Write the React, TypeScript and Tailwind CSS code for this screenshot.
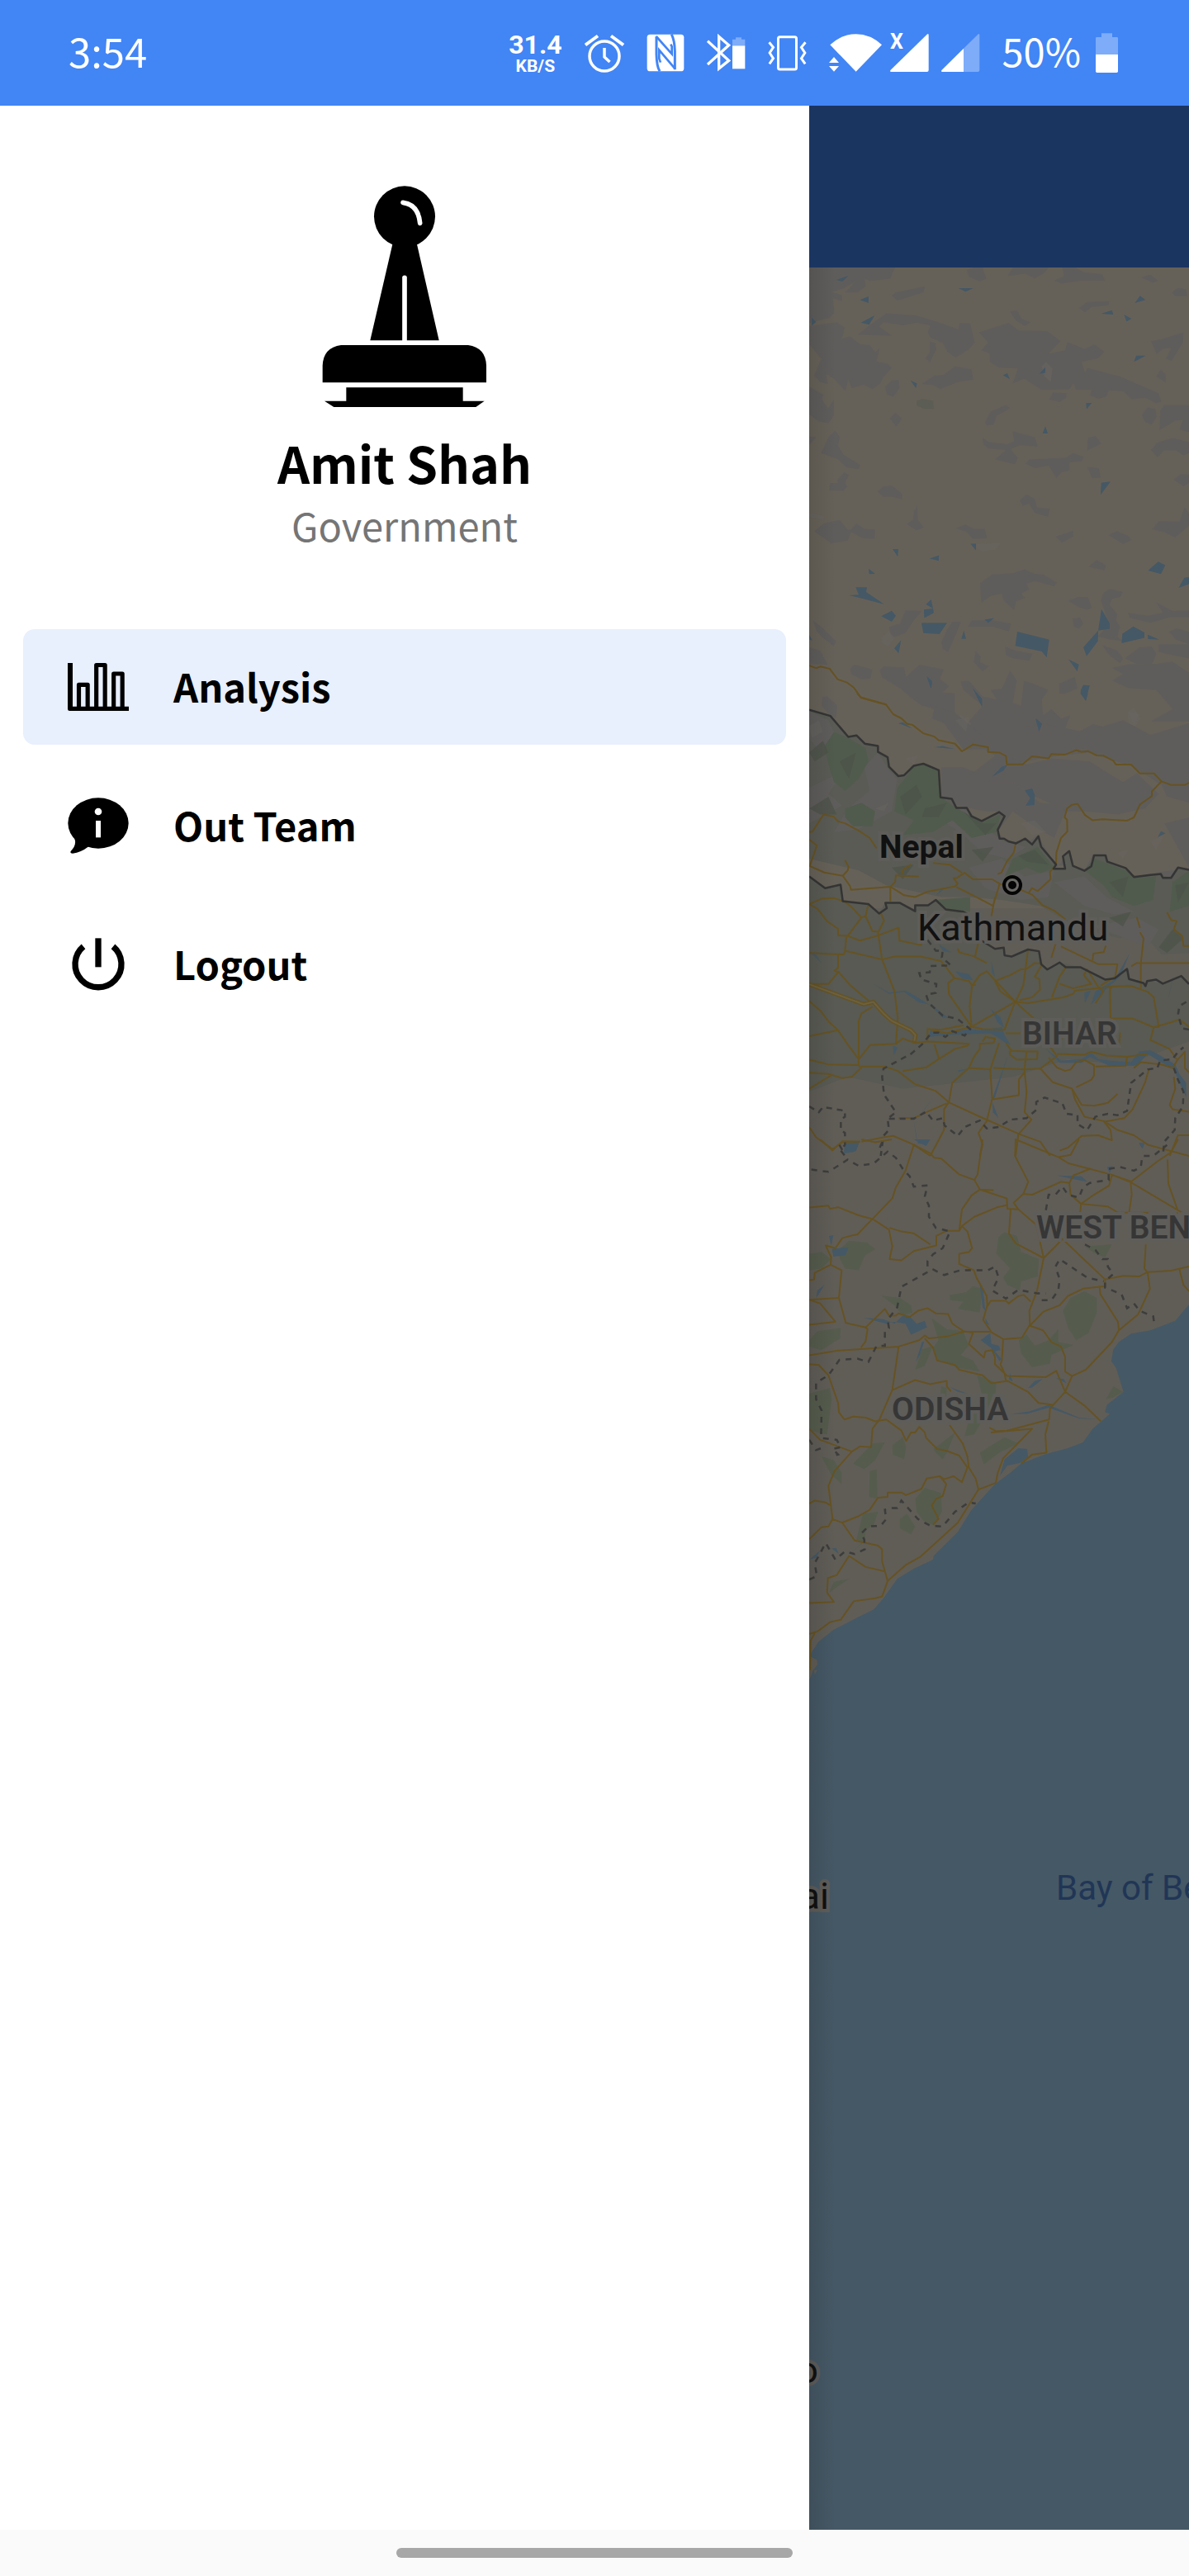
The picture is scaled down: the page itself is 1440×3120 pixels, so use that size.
import type { ReactNode } from 'react';

const TEXT_FONT = "font-['Noto_Sans_CJK_JP','Noto_Sans',sans-serif]";
const ROBOTO = "font-['Roboto',sans-serif]";

/* ---------- Status bar ---------- */

function AlarmIcon() {
  return (
    <svg viewBox="708 40 48 48" className="h-12 w-12" fill="none" stroke="white" strokeWidth="3.5">
      <circle cx="732" cy="68" r="18" />
      <path d="M732 58V69L738.5 75" />
      <path d="M709 54.500L724 43.500M740 43.500L755 54.500" strokeWidth="4" />
    </svg>
  );
}

function NfcIcon() {
  return (
    <svg viewBox="546 119 138 144" className="h-12 w-[46px]" fill="none" stroke="#4285f5" strokeWidth="9">
      <rect x="548" y="124" width="134" height="134" rx="11" fill="white" stroke="none" />
      <path d="M582 132V196Q583 240 594 258" />
      <path d="M649 252V184Q648 146 637 124" />
      <path d="M581 131L638 195V168L634 160" strokeWidth="8" />
      <path d="M597 226L592 212V181L650 249" strokeWidth="8" />
    </svg>
  );
}

function BluetoothIcon() {
  return (
    <svg viewBox="765 119 141 144" className="h-12 w-[47px]" fill="white">
      <path d="M768 148L845 219L809 248V132L845 163L768 233" fill="none" stroke="white" strokeWidth="10" />
      <path d="M858 165V142H870V135H891V142H904V165Z" opacity="0.32" />
      <path d="M858 165H904V249H858Z" />
    </svg>
  );
}

function VibrateIcon() {
  return (
    <svg viewBox="989 119 140 144" className="h-12 w-[47px]" fill="none" stroke="white" strokeWidth="9">
      <rect x="1026" y="133" width="66" height="118" rx="6" />
      <path d="M993 153L1008 171L995 191L1008 211L994 231M1125 153L1110 171L1123 191L1110 211L1124 231" />
    </svg>
  );
}

function WifiIcon() {
  return (
    <svg viewBox="69 120 195 144" className="h-12 w-[65px]" fill="white">
      <path d="M73 163Q115 124 167 124T261 163L167 260Z" />
      <path d="M87 203L62 232H112Z" fill="#4285f5" />
      <path d="M87 207L69 228H105ZM69 240H105L87 260Z" />
    </svg>
  );
}

function SignalNoDataIcon() {
  return (
    <svg viewBox="288 120 147 144" className="h-12 w-[49px]" fill="white">
      <path d="M293 261Q289 258 293 254L425 125Q431 120 431 128V255Q431 261 425 261Z" />
      <text x="291" y="178" className={ROBOTO} fontSize="75" fontWeight="700">
        X
      </text>
    </svg>
  );
}

function SignalHalfIcon() {
  return (
    <svg viewBox="477 120 141 144" className="h-12 w-[47px]" fill="white">
      <path d="M558 176L610 125Q616 120 616 128V255Q616 261 610 261H558Z" opacity="0.32" />
      <path d="M479 261Q475 258 479 254L558 176V261Z" />
    </svg>
  );
}

function BatteryIcon() {
  return (
    <svg viewBox="1041 120 81 144" className="h-12 w-[27px]" fill="white">
      <path d="M1041 198V139Q1041 135 1045 135H1062V121H1101V135H1118Q1122 135 1122 139V198Z" opacity="0.32" />
      <path d="M1041 198H1122V259Q1122 264 1117 264H1046Q1041 264 1041 259Z" />
    </svg>
  );
}

function StatusBar() {
  return (
    <header className="flex h-32 shrink-0 items-center justify-between bg-[#4285f5] pr-[86px] pl-[83px] text-white">
      <span className={`${TEXT_FONT} pb-2 text-[49px] leading-none font-normal`}>3:54</span>
      <div className="flex items-center gap-[27px]">
        <div className={`${ROBOTO} flex flex-col items-center font-bold`}>
          <span className="text-[32px] leading-8">31.4</span>
          <span className="text-[21px] leading-[21px]">KB/S</span>
        </div>
        <AlarmIcon />
        <NfcIcon />
        <BluetoothIcon />
        <VibrateIcon />
        <div className="flex items-center">
          <WifiIcon />
          <div className="ml-2 flex items-center gap-3.5">
            <SignalNoDataIcon />
            <SignalHalfIcon />
          </div>
        </div>
        <div className="flex items-center gap-[18px]">
          <span className={`${TEXT_FONT} pb-2 text-[47px] leading-none font-normal`}>50%</span>
          <BatteryIcon />
        </div>
      </div>
    </header>
  );
}

/* ---------- Drawer ---------- */

function StampLogo() {
  return (
    <svg viewBox="269 73 600 816" className="h-[272px] w-[200px]">
      <circle cx="569" cy="188" r="111" />
      <path d="M527 280H612L694 638H444Z" />
      <path d="M271 791V730Q273 664 338 655H800Q864 664 866 730V791Z" />
      <path d="M357 809H781V862H357Z" />
      <path d="M278 858H859L828 880H312Z" />
      <path d="M563 137C601 142 621 168 625 212" fill="none" stroke="white" strokeWidth="17" strokeLinecap="round" />
      <path d="M569 410V642" fill="none" stroke="white" strokeWidth="17" strokeLinecap="round" />
    </svg>
  );
}

function ChartIcon() {
  return (
    <svg viewBox="246 165 222 222" className="size-[74px]">
      <path d="M246 189H264V347H468V363H253Q246 363 246 356Z" />
      <path d="M286.500 350V268H318.500V350M350 350V196.500H381.500V350M413 350V228H444.500V350" fill="none" stroke="black" strokeWidth="15.500" strokeLinejoin="round" />
    </svg>
  );
}

function InfoBubbleIcon() {
  return (
    <svg viewBox="246 669 222 222" className="size-[74px]">
      <ellipse cx="357" cy="771" rx="110" ry="92" />
      <path d="M268 822C280 842 270 860 257 873Q253 881 264 881Q294 878 322 856Z" />
      <circle cx="357" cy="729" r="13" fill="white" />
      <path d="M348 762H366V823H348Z" fill="white" />
    </svg>
  );
}

function PowerIcon() {
  return (
    <svg viewBox="246 1173 222 222" className="size-[74px]" fill="none" stroke="black" strokeWidth="22">
      <path d="M303 1219A84 84 0 1 0 411 1219" />
      <path d="M357 1189V1294" />
    </svg>
  );
}

function NavItem({ icon, label, active }: { icon: ReactNode; label: string; active?: boolean }) {
  return (
    <button
      type="button"
      className={
        active
          ? 'flex h-[140px] w-full items-center gap-[54px] rounded-[14px] bg-[#e8effd] px-[54px] text-left'
          : 'flex h-[140px] w-full items-center gap-[54px] rounded-[14px] px-[54px] text-left'
      }
    >
      {icon}
      <span className="pb-1 text-[47px] leading-none font-bold">{label}</span>
    </button>
  );
}

function Drawer() {
  return (
    <aside className={`${TEXT_FONT} flex flex-col bg-white px-7 pt-24 text-black`}>
      <div className="flex flex-col items-center">
        <StampLogo />
        <h1 className="mt-6 text-[61px] leading-[80px] font-bold">Amit Shah</h1>
        <p className="text-[47px] leading-[72px] font-normal text-[#757575]">Government</p>
      </div>
      <nav className="mt-[90px] flex flex-col gap-7">
        <NavItem icon={<ChartIcon />} label="Analysis" active />
        <NavItem icon={<InfoBubbleIcon />} label="Out Team" />
        <NavItem icon={<PowerIcon />} label="Logout" />
      </nav>
    </aside>
  );
}

/* ---------- Map ---------- */

const ROCK = '#5f5d5b';
const WATER = '#455865';

function Plateau() {
  return (
    <g transform="translate(960 300) scale(.33333 .38265)">
      <g fill={ROCK}>
        <path d="M60 63H372L355 98L280 106L262 98L266 122L236 142H190L225 110L182 130L143 140L180 150V170L146 160L152 205L135 222L60 238Z" />
        <path d="M60 248L160 236L190 252L180 285L148 315L138 300L208 280L245 305L280 308L300 330L316 318L305 360L344 366L360 380L330 410L318 430L290 448L258 434L215 445L202 418L192 455L150 415L122 400L128 432L100 425L78 405L104 352L60 305Z" />
        <path d="M60 440L112 465L106 480L128 508L150 480V530L130 556L95 550L60 528ZM60 598L85 600L60 625Z" />
        <path d="M235 276L275 248L340 208L450 214L530 236L602 258L606 238L645 240L662 300L640 322L592 348L562 330L545 302L500 285L490 268L500 246L450 238L400 246L330 236L315 250L362 279Z" />
        <path d="M360 152L372 142L482 122L475 142L380 168ZM632 70L660 63H690L704 98L680 108L640 92ZM800 63H930L915 80L880 98L845 82L780 90ZM950 104L985 90L980 63H1025L1060 78L1125 84L1135 105L1060 104L975 114Z" />
        <path d="M676 268L785 238L822 262L925 264L974 296L930 335L990 325L998 298L1060 320L1098 306L1132 330L1110 350L1050 362L1062 395L1070 380L1190 408L1330 460L1340 488L1320 492L1280 475L1232 480L1200 455L1148 452L1140 472L1110 478L1080 468L1085 450L1030 450L1020 430L1005 448L905 450L840 415L800 430L818 382L750 380L716 362L715 335L685 325L710 300Z" />
        <path d="M482 350L498 332V296L520 302L522 322L508 345L500 364ZM467 432L515 405L550 402L590 375L650 385L657 418L600 425L535 448L510 435ZM336 440L360 420L386 418L388 445L366 472L342 465ZM352 540L374 522L398 542L376 567ZM789 202L816 198L832 225L865 236L845 248L812 232ZM1040 190L1070 172L1150 170L1148 182L1085 188L1062 206Z" />
        <path d="M1265 94L1300 85L1328 104L1310 112ZM1378 142L1400 126L1430 132L1434 154L1390 154ZM1302 296L1345 288L1420 268L1418 300L1376 360L1356 350L1375 318L1345 320L1322 338ZM1320 408L1338 385L1355 402L1357 428ZM1268 530L1290 505L1318 510L1323 535L1305 560L1280 552ZM1336 515L1350 498H1440V585L1405 575L1418 545L1390 548L1332 578ZM1302 640L1322 618L1380 602L1440 615V650L1420 658L1392 642H1350L1325 664Z" />
        <path d="M932 480L945 458L995 460L994 475L970 489ZM699 552L720 518L775 498L790 508L742 532L730 560L705 563ZM690 602L712 615L780 622L805 612L798 580L880 600L890 630L828 625L792 637L818 665L808 686L735 670L775 640L710 636L692 622ZM845 684L860 670L990 665L1020 650L1058 662L1050 676L1005 680L1006 706L978 710L958 729L930 690L880 698ZM1070 642L1072 602L1100 596L1122 620ZM1070 693L1112 698L1120 728L1088 730Z" />
        <path d="M103 650L130 600L155 578L172 600L165 625L185 655L247 688L238 702L195 695L165 670ZM132 768L136 745H165L162 735L188 710L204 720L190 745L200 755L185 770ZM308 772L330 755L360 753L398 778V797L360 788H328ZM414 875L438 860L440 835L453 817L455 862L477 885L450 895ZM79 898L115 872L170 862L200 892L212 892L232 872L260 890L300 892L298 922L255 920L212 900L200 928L140 936ZM592 888L628 876L660 890L698 890L707 920L655 922L632 900ZM825 800L850 780L880 795L888 822L935 826L928 852L880 840L858 810L835 818Z" />
        <path d="M955 914L1020 896V914L978 934ZM1148 910L1178 897L1220 912L1232 926L1200 938ZM1306 892L1330 866L1405 867L1424 822L1440 840V880L1390 918L1350 900ZM1384 734L1410 716L1440 718V745L1420 756ZM1074 1010L1104 988L1140 1006L1132 1021ZM681 1062L725 1034L800 1030L842 1018L880 1032L910 1034L960 1060L950 1072L880 1055L850 1064L860 1082L830 1095L845 1108L812 1120L805 1148L765 1115L760 1095L720 1102L685 1125Z" />
        <path d="M1000 1118L1040 1105L1072 1106L1088 1140L1070 1146L1040 1138ZM1120 1118Q1125 1085 1155 1080L1200 1090L1190 1106L1160 1112L1152 1130L1180 1160L1175 1180L1190 1200L1180 1230L1200 1245L1150 1240L1110 1230L1150 1190ZM1218 1155L1290 1165L1345 1155L1320 1122L1380 1150L1440 1148V1170L1370 1170L1300 1188L1225 1172ZM1016 1174L1045 1170L1056 1190L1040 1207L1022 1200ZM636 1200L650 1180L720 1178L795 1190L785 1215L730 1200ZM540 1250L560 1210L580 1184H612L590 1230L575 1260L565 1280L545 1270ZM350 1200L390 1190L410 1148L470 1150L440 1180L410 1220L360 1235Z" />
        <path d="M74 1180L110 1205L158 1245L150 1262L110 1235L88 1215ZM60 1265L100 1275L128 1320L60 1318ZM210 1330L225 1320L290 1335L282 1365L250 1366L212 1350ZM316 1338L330 1325L405 1328L412 1358L460 1320L550 1335L535 1365L568 1388L545 1408L590 1410V1500L550 1505L505 1490L515 1460L470 1450L430 1425L390 1395L325 1360ZM772 1262L810 1275L872 1285L860 1308L800 1300L775 1290ZM657 1312L665 1275L684 1295L680 1312L714 1325L690 1341Z" />
        <path d="M1160 1330L1225 1318L1300 1320L1380 1310L1440 1345V1500H1300L1380 1460L1320 1400L1220 1395L1160 1370L1200 1350ZM1124 1257L1180 1275L1200 1300L1190 1316L1150 1290ZM1206 1300L1260 1265L1305 1262L1322 1285L1305 1320L1250 1318ZM1330 1280V1255H1440V1300L1380 1290ZM1368 1215L1395 1205L1440 1215V1255L1390 1240Z" />
        <path d="M610 1372L640 1370L690 1420L740 1430L720 1400L760 1395L790 1338L815 1370L800 1440L830 1450L840 1370L890 1385L930 1400L905 1430L910 1480L940 1460L975 1490L1010 1480L990 1520L930 1568H620L640 1500L690 1450L620 1400ZM968 1380L1025 1358L1035 1395L990 1412H968ZM1045 1530L1090 1508L1150 1520L1200 1515L1220 1568H1040ZM108 1422L125 1420L162 1448L158 1490L130 1475L105 1450Z" />
      </g>
      <g fill="#66645f" opacity="0.7">
        <path d="M905 375L920 362L944 382L938 425L915 408ZM668 938L760 934L735 956L690 962L668 952ZM323 1235L350 1215L370 1235L345 1262L325 1250ZM588 1500L610 1478L648 1505L640 1555L610 1535ZM1218 1470L1240 1455L1265 1490L1245 1515L1220 1505ZM60 838L115 850L112 860L60 852Z" />
      </g>
      <path d="M450 485L470 478L510 484L513 510L480 510L450 500Z" fill="#5c5d54" />
      <g fill={WATER}>
        <path d="M158 102L204 88L180 107ZM244 165L276 154V175ZM248 237L298 214L278 244ZM69 221L85 235L69 247ZM602 128L657 128L628 139ZM1243 175L1262 152L1282 165ZM1120 209L1160 198L1165 212ZM1204 212L1231 225L1213 234ZM1240 361L1248 342L1283 342ZM896 399L918 378V396ZM764 404L780 397L789 416ZM428 420L452 430L448 444ZM1066 491L1087 491L1068 511ZM908 588L918 565L927 588ZM1121 744L1155 740L1119 782Z" />
        <path d="M363 954H384L382 978ZM497 984L531 974V991ZM646 937H666V958ZM276 1016L300 1032L278 1033ZM205 1100L240 1098L229 1075H270L267 1090L333 1129L260 1112ZM322 1166L360 1149L375 1165L360 1184ZM484 1129L503 1113L510 1142ZM477 1145L510 1142L513 1156L478 1172ZM468 1188H561L533 1223L475 1220ZM697 1177L732 1172L711 1188ZM613 1238L622 1212L630 1238ZM369 1268L394 1242L385 1284ZM816 1215L932 1241L923 1297L905 1278L809 1260Z" />
        <path d="M1110 1212L1122 1144L1152 1190V1206ZM1110 1212L1109 1245L1068 1293L1056 1265ZM1198 1222L1238 1199L1278 1218V1235L1195 1252ZM1290 1225L1333 1241L1291 1239ZM1291 1022L1328 994L1354 1005L1338 1033ZM1402 1077L1423 1045L1440 1042V1065ZM1002 1303L1040 1319L1034 1341ZM1047 1400L1056 1384L1079 1386L1065 1434L1046 1412ZM486 1356L507 1372L503 1397ZM653 1393L688 1428V1454ZM883 1490L906 1508L895 1534ZM60 1225L72 1244L60 1240Z" />
      </g>
      <path vectorEffect="non-scaling-stroke" d="M60 1322L85 1331L102 1326L135 1333L163 1366L197 1376L222 1392L247 1423L340 1446" fill="none" stroke="#665323" strokeWidth="2" />
    </g>
  );
}

function Himalaya() {
  return (
    <g transform="translate(960 840) scale(.33333 .35714)">
      <path
        d="M500 40L590 65L700 150L900 100L1060 130L1200 90L1300 140L1440 100V420L1350 440L1440 590L1240 620L1140 560L1090 545L1060 600L1010 580L1000 540L960 590L890 480L860 500L780 500L745 470L800 400L860 440L950 490L1000 380L900 370L800 300L700 280L620 250L540 250L540 350L600 380L700 400L760 400L740 490L800 500L950 580L1440 640V600L1440 370L1360 350L1340 310L1240 250L1080 200L940 215L780 240L700 190L620 190Z"
        fill={ROCK}
      />
      <path d="M750 200L850 240L940 220L1080 230L1200 300L1250 270L1330 340L1280 390L1180 410L1060 400L1000 400L930 370L860 340L800 300L720 300L640 280Z" fill={ROCK} />
      <path
        d="M60 55L140 75L202 145L232 142L262 170L310 178V198L345 216L350 248L384 280L405 277L440 245L475 238L531 260L537 352L578 357L595 388H633L650 416L687 432L750 402L770 416L745 462L752 492L812 508L845 492L870 512L893 484L903 520L957 580L948 594H990L982 552L1005 534L1018 584L1060 601L1085 586L1095 549H1137L1143 570L1210 592L1240 622L1330 612L1375 626L1400 590L1440 598V880L1340 885L1260 800L1190 830L1060 800L990 770L900 720L760 700L640 690L540 690L340 650L240 600L60 560Z"
        fill="#5a5b55"
      />
      <g fill={ROCK}>
        <path d="M60 60L130 90L160 150L100 200L60 150ZM310 200L350 260L380 290L360 400L240 460L150 470L200 390L280 330L260 250ZM540 360L640 400L700 450L760 500L850 520L780 560L690 540L620 480L560 440Z" />
        <path d="M60 320L190 260L130 340L180 380L60 440ZM640 590L760 560L840 620L950 600L930 690L830 700L700 660ZM950 640L1060 620L1140 690L1240 740L1170 750L1060 720ZM1090 790L1250 760L1330 800L1290 860L1180 820Z" />
      </g>
      <g fill="#515b4d">
        <path d="M150 130L200 150L265 185L275 230L240 290L190 330L150 300L130 240L115 180ZM190 390L250 370L300 400L290 450L220 450L190 420Z" />
        <path d="M440 248L475 240L530 262L535 350L600 390L650 420L690 436L755 410L740 470L650 490L580 430L510 470L400 480L440 430L370 400L380 320Z" />
        <path d="M800 560L890 520L950 590L900 610L850 590L770 620ZM1060 600L1095 560L1140 575L1210 600L1240 625L1320 620L1310 700L1240 720L1160 690L1130 650ZM1380 640L1440 600V720L1370 740ZM520 700L645 690V740L560 730Z" />
      </g>
      <g fill="#4b5249" opacity="0.7">
        <path d="M60 200L110 160L130 200L80 230ZM170 230L230 200L205 290ZM60 390L130 350L160 410L100 410ZM390 350L450 310L470 350L410 410ZM480 390L560 370L530 420L470 420ZM620 400L690 440L740 440L700 480ZM820 550L880 530L930 580L850 570ZM1150 640L1220 620L1200 690ZM1390 650L1440 640L1400 710ZM360 590L440 580L400 630ZM650 530L730 520L690 570ZM1150 760L1230 740L1200 790ZM1330 860L1380 800L1420 830L1360 880Z" />
      </g>
      <g fill="#696661" opacity="0.45">
        <path d="M60 110L95 90L110 130L70 150ZM300 390L350 370L330 400ZM410 220L455 210L440 240ZM830 440L880 430L920 470L870 480ZM1180 540L1220 530L1200 560ZM590 90L640 80L630 130ZM1220 60L1260 70L1240 110ZM1300 500L1350 480L1320 530Z" />
      </g>
      <g fill={WATER}>
        <path d="M665 0L685 15L688 42ZM1052 0H1073L1065 25ZM384 101L400 97L435 119ZM883 84L906 103L895 130ZM515 182L545 178L590 188ZM725 282L760 248L780 243L765 262ZM843 328L870 321L880 345L878 378L846 381L863 355ZM1326 487L1338 467L1355 474ZM520 685L545 660L552 662Z" />
      </g>
    </g>
  );
}

function Plains() {
  return (
    <g transform="translate(960 840) scale(.33333 .35714)">
      <path d="M60 620L118 660L174 648L182 704L275 714L314 746L335 710L390 711L445 738L446 718L492 718L520 700L556 732L620 740L650 820L690 840L735 866H767L772 890L795 892L855 868L895 874L903 920L925 936L970 912L1045 928L1135 970L1170 966L1215 934L1220 966L1282 990L1290 976L1345 984L1412 958L1440 985V1180L1200 1260L1000 1240L800 1300L600 1320L400 1340L200 1300L60 1350Z" fill="#585a53" />
      <g fill={WATER}>
        <path d="M60 874L85 886L103 913ZM592 942L640 952L655 972L615 966ZM722 908L735 960L725 948ZM288 982L350 1014L410 1007L450 1028L495 1054L460 1048L405 1012L350 1018ZM530 850L576 878L548 874ZM720 1070L755 1098L768 1135L745 1115ZM495 1050L560 1096L572 1100L545 1100Z" />
        <path d="M500 1140L560 1152L640 1138L680 1142L760 1132L770 1160L790 1190L770 1182L745 1165L720 1152L650 1154L560 1158L495 1165ZM920 1205L975 1245L1050 1240L1085 1218L1110 1240L1160 1246L1230 1250L1260 1214L1300 1210L1340 1230L1390 1258L1405 1290L1430 1320V1370L1410 1330L1385 1275L1330 1245L1290 1222L1250 1262L1150 1262L1080 1232L1050 1252L970 1252Z" />
        <path d="M1060 1015L1083 1008L1062 1050ZM1085 1054L1100 1010L1170 970L1225 880L1190 960L1130 1010ZM780 1232L735 1370L722 1382ZM725 1385L748 1440L728 1420ZM600 1278L640 1272L605 1284ZM365 1195L382 1200L368 1225ZM530 1345L470 1420L450 1448L510 1370ZM190 1526L242 1521L230 1552L186 1556ZM1258 1524L1278 1526L1272 1542ZM440 1450L450 1510L490 1530L455 1525ZM1365 1035L1385 955L1370 1010Z" />
      </g>
      <g fill="none" stroke="#665323" strokeWidth="2" strokeLinejoin="round">
        <path vectorEffect="non-scaling-stroke" d="M235 0L250 15L340 38L365 70L395 84L415 102L435 106L475 135L515 146L530 158L590 170L615 196L655 173L710 182V198L750 200L775 212L778 240H835L870 213L930 220L940 205L990 207L1030 192L1050 198L1072 195L1105 210L1130 211L1165 228L1175 241H1230L1262 271H1313L1340 298L1375 310H1425L1440 303" />
        <path vectorEffect="non-scaling-stroke" d="M1340 298L1305 332V348L1262 376L1240 420L1215 431L1125 426L1090 430L1062 412L1035 374L1015 377L997 390L988 420L997 428L998 468L975 490L958 540L957 580L935 605L937 630L890 670L870 660L858 675" />
        <path vectorEffect="non-scaling-stroke" d="M60 470L72 468L112 410L150 418L165 434L190 440L240 465L280 490L305 525M60 495L88 515L62 585L115 607L182 618L200 600L203 588L190 565M182 618L208 652L212 666L355 655L372 640L375 617L458 621M400 612L396 600L430 580M355 655V705M355 655L405 684L445 690L490 672L590 654L600 645L585 626H595L625 608L655 630H725L752 645L728 720L655 684L595 656M810 510L803 540L778 570L758 608L745 612M510 575L570 580L615 608M752 645L835 668L870 682L908 718L950 736L990 765M735 690L722 755" />
        <path vectorEffect="non-scaling-stroke" d="M60 714L105 696L150 694L185 704L212 722L250 760L200 822L165 820V798L125 772L90 730ZM275 714L265 755L250 760M318 740L332 770L312 808L290 806L265 755M200 822L245 838L312 820L385 794L388 838L465 853L480 830M195 825L190 875L185 885H165V930L152 940L165 945L130 985L60 985M60 880L185 885M190 872L325 902L370 892H465L540 908L588 965L565 982L568 1020L650 1130L643 1060L652 990L680 955L705 942L808 1045L770 1140M325 902L310 810M325 902L370 1010L382 1100L375 1190M588 965L640 975L652 990L665 988" />
        <path vectorEffect="non-scaling-stroke" d="M60 1043L100 1075L130 1112L165 1142L200 1190L240 1240V1110L250 1085L290 1062M165 942L210 990L280 1045M60 1162L165 1142M60 1242L130 1258L240 1260V1240L282 1192L375 1188L400 1170L445 1185L490 1180L640 1188L635 1194L590 1205L530 1240L485 1268L400 1280M240 1265H335L382 1280L445 1325L520 1348L570 1388L680 1435L825 1495L900 1520L935 1568M60 1286L130 1290L180 1304L215 1300L250 1268M60 1340L140 1295M515 1190L532 1240M490 1178V1138L540 1140L620 1125M500 1140L560 1152L650 1130L690 1138L770 1140" />
        <path vectorEffect="non-scaling-stroke" d="M650 1130L810 1045L838 990L855 870M735 975L790 955L830 935H848L880 914L908 916M735 975L755 1010L808 1045L855 1050L985 1030L1020 1018L1025 1008L1165 993L1230 992L1290 1012L1312 1030L1330 1130L1312 1132L1235 1102H1155L1153 1000L1165 993M908 916L880 960L897 970L898 1005L870 1030L825 1040M942 1030L970 960L995 925M970 984L1018 1000L1085 985L1058 955L1070 935L1110 995L1130 1010L1100 1050M975 858L1110 918H1180L1172 960L1120 990M1230 925L1250 914H1440M1265 1000V915L1275 830L1262 810M1090 905L1092 882L1130 877L1138 855M1250 758L1262 795M1360 742L1375 768L1395 772L1385 800L1415 822L1420 856H1440M600 865L605 878L655 890L705 914M675 842L662 895M955 850L940 896" />
        <path vectorEffect="non-scaling-stroke" d="M808 1045L880 1105L900 1150L960 1230L900 1272L842 1275L730 1270M690 1180L700 1165L735 1170L730 1185L680 1188V1205L660 1230L640 1270L580 1320L568 1385L550 1410V1480L500 1568M750 1185L718 1275L725 1375L705 1450L675 1490L690 1530L680 1568M775 1185L795 1212L850 1214H890L888 1240L815 1242L790 1225V1212M850 1214L842 1275L850 1350L843 1420L868 1445L820 1495L810 1568M842 1285L822 1308V1362L728 1376M640 1270L715 1274M775 1152H850L980 1172M1190 1150L1185 1200M930 1235L960 1268L990 1280L1010 1275L1030 1250L1060 1243L1095 1260V1295L1085 1310L1030 1335M900 1272L945 1318L1015 1340L1040 1380L1050 1395L1095 1398L1145 1388L1180 1358M1015 1340L1025 1375L1060 1435L1130 1450L1155 1480L1160 1515L1110 1498L1050 1500L1000 1540L970 1550" />
        <path vectorEffect="non-scaling-stroke" d="M960 1222L1060 1225L1085 1215L1140 1228L1215 1232L1210 1262L1100 1265M1215 1232L1290 1222M1240 1270L1265 1250L1340 1258L1380 1270L1400 1240L1425 1215V1270L1440 1285M1312 1132L1300 1175L1370 1206L1395 1240M1312 1132L1375 1115L1405 1105L1440 1130M1295 1272L1280 1320L1250 1380L1235 1410L1205 1440L1135 1452L1180 1480L1240 1498L1290 1530L1440 1568M1385 1300L1390 1340L1370 1395L1380 1410L1440 1418M1440 1498H1400L1370 1568M60 1470L85 1505L145 1545L180 1522L245 1520M250 1520L330 1505L365 1500L440 1530L500 1568M385 1440H440L485 1420L560 1390" />
      </g>
      <path vectorEffect="non-scaling-stroke" d="M60 986L258 1054L293 1046L330 1085L360 1110L430 1142L446 1158L442 1182" fill="none" stroke="#665323" strokeWidth="5" />
      <path vectorEffect="non-scaling-stroke" d="M60 986L258 1054L293 1046L330 1085L360 1110L430 1142L446 1158L442 1178" fill="none" stroke="#6b6142" strokeWidth="2" />
      <g fill="none" stroke="#343434" strokeWidth="2.500" strokeLinejoin="round">
        <path vectorEffect="non-scaling-stroke" d="M60 55L137 76L202 147L232 142L262 170L310 178V198L345 216L350 248L384 280L405 277L440 245L475 238L531 260L537 352L578 357L595 388H633L650 416L687 432L750 402L770 416L745 462L752 492H768L785 502L812 508L845 492L870 512L893 484L903 520L957 580L948 594H990L982 552L1005 534L1018 584L1060 601L1085 586L1095 549H1137L1143 570L1210 592L1240 622L1300 615L1338 612L1345 625H1375L1400 590L1440 598" />
        <path vectorEffect="non-scaling-stroke" d="M60 620L118 660L174 648L182 704L275 714L314 746L342 728L337 710H390L445 738V718H492L520 700L556 732L620 740L640 750L645 818L690 840L735 866L767 862L770 888L795 892L855 868L895 874L903 918L925 936L970 912L992 928H1045L1135 970L1170 966L1215 934L1222 968L1275 982L1282 992L1288 975L1320 970L1345 984L1412 958L1440 985" />
      </g>
      <g fill="none" stroke="#3d3d3c" strokeWidth="2.500" strokeDasharray="7 6">
        <path vectorEffect="non-scaling-stroke" d="M490 836L520 872H545L542 895L575 922L500 924L498 945L460 948L468 970L522 985L520 1015L485 1022L495 1050L545 1092L600 1104L645 1138L625 1160L580 1145L555 1165L530 1150L505 1150L470 1190L430 1222L330 1272L325 1300L332 1360L375 1420L345 1442L350 1480L330 1500L320 1568" />
        <path vectorEffect="non-scaling-stroke" d="M350 1442H440L485 1418L510 1448L545 1440L552 1465L600 1500L625 1470L680 1448L705 1475L750 1470L790 1445L850 1440L885 1412L885 1385L915 1370L980 1390L995 1425L1035 1430V1460L1070 1480L1100 1435L1145 1425L1180 1430L1215 1415L1230 1320L1290 1275L1325 1270L1335 1245L1380 1240L1400 1215L1420 1200M1440 1140L1415 1135L1400 1090L1405 1060L1440 1040M60 1400L95 1420L110 1402L190 1415V1435L175 1445V1480L190 1490V1530L175 1550L190 1568M1385 1270L1400 1310L1420 1350L1418 1400L1390 1440L1388 1480L1350 1520L1345 1568" />
      </g>
    </g>
  );
}

function Coast() {
  return (
    <g transform="translate(960 1380) scale(.33333 .44643)">
      <g fill="#555c4d">
        <path d="M168 300L205 275L270 280L300 298L262 315L240 355L190 350L172 325ZM60 310L105 305L140 325L105 350L60 355ZM60 545L90 520L175 512L172 540L105 572L60 562ZM322 424L390 430L430 450L435 470L400 478L370 450ZM570 422L630 415L655 398L688 405L680 470L600 460L620 440L572 436ZM505 485L560 515L620 520L640 560L610 585L655 600L680 630L600 620L530 600L510 565L530 545ZM445 625L470 570L510 560L480 615Z" />
        <path d="M748 265L770 252L815 262L830 305L895 325L890 372L830 385L825 410L780 395L765 375L790 350L740 310ZM982 465L1010 430L1060 412L1105 430V470L1075 525L1030 545L1000 510ZM822 545L850 530L880 560L930 545L965 515L965 550L1020 558L940 585L935 608L870 618L830 580ZM1060 290L1160 285L1135 320L1100 310ZM1138 705L1165 670L1200 685L1165 700ZM680 850L770 808L820 825L750 850L695 882ZM60 690L135 675L142 705L125 800L60 790Z" />
        <path d="M362 830L400 808L412 835L405 868L364 855ZM220 880L290 825L335 822L300 870L260 895ZM280 900L305 895L308 975L278 970ZM512 840L590 795L560 850L545 868L520 850ZM446 975L480 945L540 960L542 1010L515 1048L475 1035L450 1010ZM390 1030L415 1015L445 1050L430 1072L390 1055ZM232 1085L255 1015L310 1010L295 1045L265 1060L262 1090L215 1120L250 1095ZM105 860L150 870L178 905V935L140 910ZM132 1230L150 1200L205 1192L160 1215ZM670 640L740 660L735 700L660 800L625 805L640 760L690 700ZM540 670L560 675L555 760L530 740Z" />
      </g>
      <path d="M60 1402L70 1390L95 1362L150 1330L240 1295L295 1275L330 1245L380 1192L440 1165L510 1140L512 1130L600 1065L650 1005L735 935L790 905L830 880L915 855L1000 838L1055 822L1090 785L1122 765L1152 745L1135 740L1142 720L1202 685L1175 620L1158 602L1165 570L1185 550L1230 527L1300 518L1390 492L1440 448V4000H60Z" fill={WATER} />
      <path d="M62 1402L88 1412L90 1425L75 1440L60 1468ZM78 1440L90 1440L80 1452Z" fill="#605c55" />
      <g fill={WATER}>
        <path d="M753 913L770 868L820 838L852 840L855 862L825 878L780 885ZM683 545L718 525L722 555L750 560L755 572L735 575L758 595L752 602L720 565ZM680 395L692 410L700 465L690 455ZM700 485L715 505L702 498ZM143 297L203 293L192 314L148 318ZM132 262L148 260L140 288ZM85 430L90 410L115 395L95 420ZM258 484L330 488L370 500L400 478L428 482L450 500L480 492L488 510L430 530L410 500L370 495L340 500ZM447 605L470 550L478 548L462 585ZM186 38L196 10L242 8L222 34ZM1142 75L1162 72L1152 92ZM962 98L1050 100L1070 115L1020 108ZM1258 10L1278 10L1270 25ZM440 0H500L485 18Z" />
        <path d="M572 672L635 690L600 685ZM785 650L790 635L800 658ZM855 675L880 655L908 650L870 673ZM795 745L860 738L930 720L1040 755L1120 760L1040 757L930 728L850 745ZM60 1140L100 1115L85 1135ZM142 1110L158 1108L168 1125ZM957 648L985 650L995 662Z" />
      </g>
      <g fill="none" stroke="#665323" strokeWidth="2" strokeLinejoin="round">
        <path vectorEffect="non-scaling-stroke" d="M100 0L145 30L180 5L245 6M250 0L300 8L360 0M440 15L500 38L515 50L540 52L605 95L660 110L680 136L778 160L780 188L820 190L803 172L838 148L870 150L975 115L1005 118L1020 98L1080 80L1002 65L965 48L1010 42L1040 0M965 48L810 0L808 45L856 115L838 148M690 0L672 95L660 110M440 15L410 85L375 130L362 160L290 216L235 258L220 260L180 268L155 295L120 288L140 320L138 340L80 362L78 380L60 382M60 185L130 180L135 188L165 184L240 206L290 216L350 245L362 290L352 325L395 328L440 303L522 288V262L560 248H605L615 190L650 152L680 136L730 138M352 240L395 250L440 255L500 285M138 340L178 355L168 430L60 435L100 445L155 495L60 503M168 430L193 498L265 510L272 515L265 548L248 565" />
        <path vectorEffect="non-scaling-stroke" d="M60 586L165 573L385 562L460 545L480 532L495 540L560 535L620 522L720 522L765 542L833 538L860 505L910 518L940 550L975 562L990 590V630L1015 642L1065 625L1160 550L1185 518L1255 475L1298 405L1290 362M265 510L335 460L350 478H375L385 472L425 482L455 465L490 458L520 472L565 474L580 500L620 520L655 525L640 555L670 575L695 592L700 575L725 572L735 590V610L770 635L775 655M765 542L760 600L755 610L770 635L780 642L920 645L958 628L990 685L935 730L932 760L780 790L740 792L715 782M480 540L510 565L525 600L590 612L605 625L690 640L722 662L780 655L855 685L893 715L945 720M1015 642L990 685L1060 722L1120 765M385 562L362 680L315 760L290 785L285 835L245 833L215 847L100 815L60 785M362 680L445 653L500 664L560 655V670L575 684" />
        <path vectorEffect="non-scaling-stroke" d="M60 610L95 612L130 640L165 715L168 740L188 760L220 752L265 755L300 765L340 760L395 790L412 818L430 795H445L460 780L480 795L485 810L525 840L560 845L605 858L635 890L615 930L585 914L550 922L535 914L487 920L468 948L412 965L395 958L345 958V970L310 972L280 1005L240 1022L180 1040L145 1030L130 940L152 900L215 847M570 775L618 825L635 860L640 890L665 920L675 950L600 1040L465 1132L410 1155L345 1198L325 1240L300 1245L222 1253L175 1303L135 1310L90 1335L60 1342M675 950L738 932L745 905L765 865L870 785L720 795M930 765L918 800L922 850L870 855L830 880M535 914L558 935L545 968L522 975L505 993L530 1030L510 1045M60 988L80 980L120 985L135 992M60 1085L105 1052L130 1050L145 1030M180 1040L225 1088L310 1102L325 1112V1145L345 1198M125 1230L128 1190L160 1182L205 1130L265 1160L335 1172M125 1230L150 1255L60 1258M80 1340L65 1360L63 1440" />
        <path vectorEffect="non-scaling-stroke" d="M605 248L615 235L660 210L740 185L780 178M615 235L635 250L652 295L640 306L605 310V338L658 355L668 375L705 425L707 450L692 490L720 520M792 190L786 255L810 282L912 322L888 410L860 465L862 505M820 190L885 232L912 322L955 290L980 270L1135 380L1200 370L1258 372L1290 360L1375 356L1440 345M1405 352L1420 395L1440 412M1290 362L1278 350L1283 285M1135 380V398L1055 405L1000 425L970 450L910 468L862 505M1115 400L1118 420L1182 495L1185 518M705 455L720 438L775 438L785 445L820 425L840 422L865 440M1080 80L1160 96L1228 116L1440 210M1228 116L1325 60L1375 35L1400 0M1362 55L1365 120L1398 190M1228 116L1232 150L1222 200M1048 175L1085 155L1150 125L1160 96L1230 114M1005 118L1010 150L1048 175L1145 182L1180 198L1400 200M1048 175L1045 195L1010 230" />
      </g>
      <g fill="none" stroke="#3d3d3c" strokeWidth="2.500" strokeDasharray="7 7">
        <path vectorEffect="non-scaling-stroke" d="M68 82L130 88L200 55L240 72L295 65L345 33L375 50L400 80L425 100L440 128L490 125L480 155L495 180V210L520 240L572 250L545 295L510 312L490 330L490 345L550 368L610 355L710 355L735 345L748 375L725 410L775 432L820 408L890 418H920M905 436H940L965 410L970 380L955 345L970 325L1070 375L1130 385M490 360L395 400L380 455L345 490L350 512L335 520V560L305 560L275 604L235 595L170 598L130 640L85 660V705L105 735L103 810L160 815L175 835L145 840L165 855L150 858" />
        <path vectorEffect="non-scaling-stroke" d="M60 815L85 843L110 836M60 1194L88 1185L80 1150L120 1095L155 1140L190 1118L225 1125L262 1112L260 1085L248 1070L275 1050L320 1048L340 1030L335 1005L355 1000L380 1000L395 980L455 1030L500 1048L545 1050L590 1010L640 985L665 988M920 192L930 150L955 150L980 128L1000 150L1040 158L1055 130L1080 118L1148 110V80L1190 75L1240 85L1265 75L1270 45H1310L1360 15M1062 285L1100 300L1125 325H1145V345L1165 365L1135 385V402L1195 420L1215 458L1240 445L1260 465L1310 480L1315 508M325 8L315 25M170 15L190 42" />
      </g>
    </g>
  );
}

const HALO = '[-webkit-text-stroke:8px_#5e5d5a] [paint-order:stroke_fill]';

function MapView() {
  return (
    <div className={`${ROBOTO} relative flex-1 overflow-hidden bg-[#455865]`}>
      <svg
        viewBox="980 324 460 2740"
        preserveAspectRatio="xMinYMin slice"
        className="absolute inset-0 h-full w-full"
        aria-label="Map"
      >
        <path d="M980 324H1440V1200H980Z" fill="#666158" />
        <path d="M980 1100H1440V2050H980Z" fill="#605d57" />
        <Plateau />
        <Himalaya />
        <Plains />
        <Coast />
        <circle cx="1226" cy="1072" r="10" fill="#6a6865" stroke="#050505" strokeWidth="4" />
        <circle cx="1226" cy="1072" r="5" fill="#050505" />
      </svg>
      <span className={`absolute top-[680px] left-[85px] text-[39px] leading-[44px] font-bold text-[#111] ${HALO}`}>Nepal</span>
      <span className={`absolute top-[774px] left-[131px] text-[45px] leading-[52px] text-[#111] ${HALO}`}>Kathmandu</span>
      <span className={`absolute top-[906px] left-[258px] text-[39px] leading-[44px] font-semibold text-[#363636] ${HALO}`}>BIHAR</span>
      <span className={`absolute top-[1141px] left-[275px] text-[39px] leading-[44px] font-semibold whitespace-nowrap text-[#363636] ${HALO}`}>WEST BENGAL</span>
      <span className={`absolute top-[1361px] left-[100px] text-[39px] leading-[44px] font-semibold text-[#363636] ${HALO}`}>ODISHA</span>
      <span className="absolute top-[1937px] left-[299px] text-[42px] leading-[52px] whitespace-nowrap text-[#213656]">Bay of Bengal</span>
      <span className={`absolute top-[1947px] right-[436px] text-[45px] leading-[52px] text-[#111] ${HALO}`}>Chennai</span>
      <span className={`absolute top-[2521px] right-[449px] text-[45px] leading-[52px] text-[#111] ${HALO}`}>Colombo</span>
      <div className="absolute inset-y-0 left-0 w-8 bg-linear-to-r from-black/10 to-transparent" />
    </div>
  );
}

export default function App() {
  return (
    <div className="flex min-h-screen flex-col bg-white">
      <StatusBar />
      <main className="grid flex-1 grid-cols-[49fr_23fr]">
        <Drawer />
        <section className="flex min-w-0 flex-col">
          <div className="h-[196px] shrink-0 bg-[#1b3561]" />
          <MapView />
        </section>
      </main>
      <footer className="flex h-14 shrink-0 items-center justify-center bg-[#fafafa]">
        <div className="h-3 w-1/3 rounded-full bg-[#a7a7a7]" />
      </footer>
    </div>
  );
}
